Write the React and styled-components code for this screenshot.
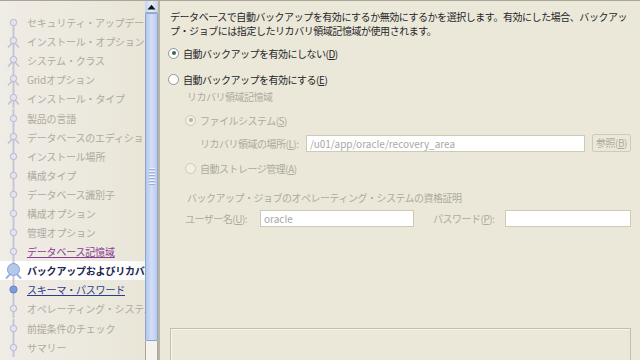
import styled, { createGlobalStyle } from 'styled-components';

const GlobalStyle = createGlobalStyle`
  html, body {
    margin: 0;
    padding: 0;
    background: #ebe8da;
  }
  body {
    font-family: "Noto Sans CJK JP", "DejaVu Sans", sans-serif;
  }
`;

// step list on the left; kind decides which node is drawn
const steps = [
  { label: 'セキュリティ・アップデート', kind: 'first' },
  { label: 'インストール・オプション', kind: 'person' },
  { label: 'システム・クラス', kind: 'person' },
  { label: 'Gridオプション', kind: 'person' },
  { label: 'インストール・タイプ', kind: 'person' },
  { label: '製品の言語', kind: 'dot' },
  { label: 'データベースのエディション', kind: 'person' },
  { label: 'インストール場所', kind: 'dot' },
  { label: '構成タイプ', kind: 'dot' },
  { label: 'データベース識別子', kind: 'dot' },
  { label: '構成オプション', kind: 'dot' },
  { label: '管理オプション', kind: 'dot' },
  { label: 'データベース記憶域', kind: 'dot', state: 'visited' },
  { label: 'バックアップおよびリカバリ', kind: 'current', state: 'current' },
  { label: 'スキーマ・パスワード', kind: 'blue', state: 'link' },
  { label: 'オペレーティング・システム・グループ', kind: 'dot' },
  { label: '前提条件のチェック', kind: 'dot' },
  { label: 'サマリー', kind: 'dot' },
];

const StepNode = ({ kind }) => {
  const c = 9.5;
  return (
    <NodeIcon width="27" height="19" viewBox="0 0 27 19">
      <line x1="13.5" y1={kind === 'first' ? c : 0} x2="13.5" y2="19" stroke="#c6c6d6" strokeWidth="2" />
      {kind === 'person' && (
        <g stroke="#c2c2d2" strokeWidth="1.6" fill="none">
          <line x1="13.5" y1={c} x2="8" y2={c + 6} />
          <line x1="13.5" y1={c} x2="19" y2={c + 6} />
        </g>
      )}
      {kind === 'current' && (
        <g stroke="#9ab2dc" strokeWidth="2" fill="none">
          <line x1="13.5" y1={c} x2="6" y2={c + 8} />
          <line x1="13.5" y1={c} x2="21" y2={c + 8} />
        </g>
      )}
      {kind === 'current' ? (
        <circle cx="13.5" cy={c - 1} r="6" fill="#b4c8ec" stroke="#86a0d0" strokeWidth="1" />
      ) : kind === 'blue' ? (
        <circle cx="13.5" cy={c} r="3.6" fill="#7f9cd8" stroke="#6682c0" strokeWidth="1" />
      ) : (
        <circle cx="13.5" cy={kind === 'person' ? c - 1 : c} r="3.2" fill="#e4e4ee" stroke="#b8b8cc" strokeWidth="1" />
      )}
    </NodeIcon>
  );
};

const App = () => (
  <>
    <GlobalStyle />
    <Frame>
      <Sidebar>
        {steps.map(step => (
          <StepRow key={step.label} $current={step.state === 'current'}>
            <StepNode kind={step.kind} />
            <StepLabel $state={step.state}>{step.label}</StepLabel>
          </StepRow>
        ))}
      </Sidebar>

      <ScrollBar>
        <ScrollButton>
          <svg width="9" height="6" viewBox="0 0 9 6">
            <path d="M0.5 5.5 L4.5 0.8 L8.5 5.5 Z" fill="#111" />
          </svg>
        </ScrollButton>
        <Thumb>
          <Grip />
        </Thumb>
        <Track />
      </ScrollBar>

      <Main>
        <Description>
          <div>データベースで自動バックアップを有効にするか無効にするかを選択します。有効にした場合、バックアッ</div>
          <div>プ・ジョブには指定したリカバリ領域記憶域が使用されます。</div>
        </Description>

        <RadioRow $top={7}>
          <Radio $checked />
          <RadioText>
            自動バックアップを有効にしない(<u>D</u>)
          </RadioText>
        </RadioRow>

        <RadioRow $top={10}>
          <Radio $warm />
          <RadioText>
            自動バックアップを有効にする(<u>E</u>)
          </RadioText>
        </RadioRow>

        <GroupLabel $top={3}>リカバリ領域記憶域</GroupLabel>

        <RadioRow $top={8} $indent={17}>
          <Radio $checked $disabled />
          <RadioText $disabled>
            ファイルシステム(<u>S</u>)
          </RadioText>
        </RadioRow>

        <FieldRow $top={6}>
          <FieldLabel $indent={32} $width={138}>
            リカバリ領域の場所(<u>L</u>):
          </FieldLabel>
          <TextField $width={279}>/u01/app/oracle/recovery_area</TextField>
          <BrowseButton>
            参照(<u>B</u>)
          </BrowseButton>
        </FieldRow>

        <RadioRow $top={8} $indent={17}>
          <Radio $disabled $warm />
          <RadioText $disabled>
            自動ストレージ管理(<u>A</u>)
          </RadioText>
        </RadioRow>

        <GroupLabel $top={15}>バックアップ・ジョブのオペレーティング・システムの資格証明</GroupLabel>

        <FieldRow $top={4}>
          <FieldLabel $indent={17} $width={92}>
            ユーザー名(<u>U</u>):
          </FieldLabel>
          <TextField $width={154}>oracle</TextField>
          <FieldLabel $indent={19} $width={91}>
            パスワード(<u>P</u>):
          </FieldLabel>
          <TextField $grow />
        </FieldRow>

        <BottomBox />
      </Main>
    </Frame>
  </>
);

export default App;

const Frame = styled.div`
  display: flex;
  height: 359px;
  overflow: hidden;
  border-top: 1px solid #a8a496;
`;

const Sidebar = styled.div`
  width: 145px;
  flex-shrink: 0;
  padding-top: 12px;
  overflow: hidden;
  background: linear-gradient(to right, #f0ece6, #e9e6d8);
`;

const StepRow = styled.div`
  display: flex;
  align-items: center;
  height: 19.1px;
  white-space: nowrap;
  background: ${p => (p.$current ? 'linear-gradient(to right, #ffffff 85%, #f6f6f2)' : 'transparent')};
`;

const NodeIcon = styled.svg`
  flex-shrink: 0;
`;

const StepLabel = styled.span`
  font-size: 10px;
  line-height: 19px;
  letter-spacing: -0.2px;
  color: ${p =>
    p.$state === 'visited' ? '#8a3c94' : p.$state === 'link' ? '#2c3c90' : p.$state === 'current' ? '#1c2450' : '#aeaa9e'};
  font-weight: ${p => (p.$state === 'current' ? 700 : 400)};
  text-decoration: ${p => (p.$state === 'visited' || p.$state === 'link' ? 'underline' : 'none')};
`;

const ScrollBar = styled.div`
  display: flex;
  flex-direction: column;
  width: 13px;
  flex-shrink: 0;
  border-right: 2px solid #b8b4a4;
`;

const ScrollButton = styled.div`
  display: flex;
  align-items: center;
  justify-content: center;
  height: 11px;
  background: linear-gradient(to right, #c6d4ee, #e4ecfa, #c6d4ee);
  border-bottom: 1px solid #9cb0d6;
`;

const Thumb = styled.div`
  display: flex;
  align-items: center;
  justify-content: center;
  height: 328px;
  flex-shrink: 0;
  box-sizing: border-box;
  background: linear-gradient(to right, #b4c8ee, #d2def6 50%, #b8cbef);
  border: 1px solid #8ea4cc;
  border-radius: 1px;
`;

const Grip = styled.div`
  width: 6px;
  height: 18px;
  background: repeating-linear-gradient(to bottom, #eef2fc 0 1px, #9aaed6 1px 2px, transparent 2px 3px);
`;

const Track = styled.div`
  flex: 1;
  background: #f4f2ea;
  border-left: 1px solid #a8a496;
  border-right: 1px solid #a8a496;
`;

const Main = styled.div`
  flex: 1;
  min-width: 0;
  overflow: hidden;
  padding: 9px 9px 0 8px;
  font-size: 10px;
  letter-spacing: -0.5px;
  color: #262626;
`;

const Description = styled.div`
  padding-left: 2px;
  line-height: 14px;
  letter-spacing: -0.45px;
  white-space: nowrap;
`;

const RadioRow = styled.div`
  display: flex;
  align-items: center;
  gap: 4px;
  height: 16px;
  margin-top: ${p => p.$top}px;
  padding-left: ${p => p.$indent || 0}px;
`;

const Radio = styled.span`
  position: relative;
  flex-shrink: 0;
  width: 11px;
  height: 11px;
  box-sizing: border-box;
  border-radius: 50%;
  border: 1px solid ${p => (p.$disabled ? '#cdc8b6' : p.$warm ? '#9a9488' : '#8a949c')};
  background: ${p => (p.$disabled ? '#f2efe6' : '#ffffff')};

  &::after {
    content: '';
    display: ${p => (p.$checked ? 'block' : 'none')};
    position: absolute;
    left: 2.5px;
    top: 2.5px;
    width: 4px;
    height: 4px;
    border-radius: 50%;
    background: ${p => (p.$disabled ? '#b6b2a4' : '#3e6a46')};
  }
`;

const RadioText = styled.span`
  white-space: nowrap;
  color: ${p => (p.$disabled ? '#aeaa9c' : '#262626')};
`;

const GroupLabel = styled.div`
  height: 14px;
  line-height: 14px;
  margin-top: ${p => p.$top}px;
  padding-left: 19px;
  color: #aeaa9c;
  white-space: nowrap;
`;

const FieldRow = styled.div`
  display: flex;
  align-items: center;
  height: 18px;
  margin-top: ${p => p.$top}px;
`;

const FieldLabel = styled.span`
  box-sizing: border-box;
  width: ${p => p.$width}px;
  padding-left: ${p => p.$indent}px;
  flex-shrink: 0;
  white-space: nowrap;
  color: #aeaa9c;
`;

const TextField = styled.div`
  ${p => (p.$grow ? 'flex: 1;' : `width: ${p.$width}px; flex-shrink: 0;`)}
  height: 17px;
  box-sizing: border-box;
  padding: 0 3px;
  line-height: 15px;
  letter-spacing: 0;
  background: #ffffff;
  border: 1px solid #cfcab8;
  color: #a8a8a8;
  white-space: nowrap;
  overflow: hidden;
`;

const BrowseButton = styled.div`
  margin-left: 7px;
  flex: 1;
  height: 18px;
  box-sizing: border-box;
  border: 1px solid #cfcab8;
  border-radius: 2px;
  line-height: 16px;
  text-align: center;
  color: #aeaa9c;
  white-space: nowrap;
`;

const BottomBox = styled.div`
  margin: 101px 0 0 2px;
  height: 40px;
  border: 1px solid #c4bfac;
  box-shadow: inset 1px 1px 0 #f6f4ec;
`;
